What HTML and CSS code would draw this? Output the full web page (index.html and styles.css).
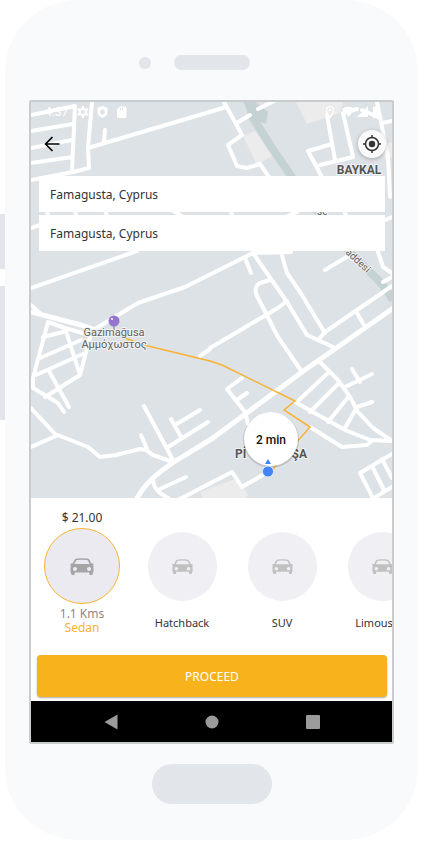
FILE: index.html
```html
<!DOCTYPE html>
<html lang="en">
<head>
<meta charset="utf-8">
<meta name="viewport" content="width=device-width, initial-scale=1">
<title>Choose a ride</title>
<link rel="stylesheet" href="styles.css">
</head>
<body>
<svg class="symbols" aria-hidden="true">
  <symbol id="car" viewBox="0 0 24 17">
    <path fill-rule="evenodd" d="M2.600 5.500 L4.200 2.200 Q5 .8 7 .5 Q12 -.1 17 .5 Q19 .8 19.800 2.200 L21.400 5.500 H23.500 V7.500 H23 Q23.500 8.500 23.500 10 V14.500 H22.800 V16 Q22.800 17 21.800 17 H20.300 Q19.300 17 19.300 16 V14.500 H4.700 V16 Q4.700 17 3.700 17 H2.200 Q1.200 17 1.200 16 V14.500 H.5 V10 Q.5 8.500 1 7.500 H.5 V5.500 Z M4.400 5.900 H19.600 L18.200 3 Q17.700 2.100 16.700 2 Q12 1.400 7.300 2 Q6.300 2.100 5.800 3 Z M5 9 a2 2 0 1 0 .01 0 Z M19 9 a2 2 0 1 0 .01 0 Z"/>
  </symbol>
</svg>
<main class="phone">
  <div class="side-buttons"><span class="key key-short"></span><span class="key key-long"></span></div>
  <div class="earpiece"><span class="camera"></span><span class="speaker"></span></div>
  <div class="screen">
    <section class="map">
      <svg class="map-canvas" viewBox="31 102 361 396" role="img" aria-label="Route map">
        <g class="block">
          <path d="M296 102H343L340 113L307 124ZM243 136L255 131L272 156L257 165ZM380 145L392 142V158L385 160ZM200 492L238 478L248 495L245 499H203Z"/>
        </g>
        <path class="river" d="M248 100L253 118L270 145L294 180L340 242L372 274Q383 284 393 300"/>
        <path class="river-bulge" d="M243 102H255L268 112L266 124L255 120Z"/>
        <g class="road">
          <path d="M31 115L75 106L72 171M31 131L73 124M31 148L72 140M31 163L72 157M31 180L73 172L89 168L88 148L92 102M88 148L213 111L226 107M104 142L105 130"/>
          <path d="M224 102L242 135L228 145L237 166L247 168L260 164L269 177M237 123L250 115M258 109L274 101"/>
          <path d="M327 115L335 160M332 144L308 151L322 177M320 165L353 157L343 113L357 109M362 110L378 117M377 102L388 157L390 197M382 123L392 121M385 220L392 217"/>
          <path d="M46 208L49 218M74 208L77 218M104 208L108 218M168 208L185 218M230 208L233 218M285 217L297 212M343 208L347 218M31 228L40 225"/>
          <path d="M31 288L137 251M31 305L41 314M95 329L138 303L185 287L213 273L253 253L287 302L307 335L333 347"/>
          <path d="M48 322L33 378V388L58 403L64 412M48 322L65 328L90 335M43 337L63 332M40 358L81 340M36 375L85 353M65 328L80 375M90 337L80 375L45 397M49 371L69 407"/>
          <path d="M31 408L55 434L88 447L100 457L116 455L140 449L146 450L153 455L173 462M31 447L56 436M141 435L147 449M144 406L174 462"/>
          <path d="M168 447L208 422M171 419L181 437M175 425L200 410M153 478Q153 488 160 493L171 500M158 490L186 477M178 500L232 472L242 487L268 472"/>
          <path d="M245 258L251 273M270 280L260 283Q253 287 257 296L278 337L302 372M210 348L278 308L287 301M253 253L291 252M281 252L287 273L300 292L325 333M318 340L325 332L392 286M325 270L350 255M378 252L383 267L392 273M383 282L392 277M357 313L364 325"/>
          <path d="M200 356L210 349"/>
          <path d="M318 360L338 380L350 397L358 412L373 428L392 441M310 412L338 384M328 422L349 396M345 428L357 407L372 402M345 387L372 374M352 369L360 382M328 373L299 400"/>
          <path d="M242 378L227 389L245 412L248 424M247 393L237 400M295 402L345 430L370 440L392 441M310 427L342 447L367 445L373 440"/>
          <path d="M392 454L360 473L374 500M372 466L384 490M382 459L392 478M374 498L392 487"/>
        </g>
        <path class="road road-wide" d="M31 312L81 325L96 330M136 500Q146 480 174 462L213 438L302 372L392 309"/>
        <path class="route" d="M114 334L144 345L210 361L222 365L295 401L284 410L310 427L296 443L272 470"/>
        <g class="map-label street"><text x="317" y="215">se</text><text transform="translate(345 253) rotate(43)">addesi</text></g>
        <text class="map-label district" x="359" y="174" text-anchor="middle">BAYKAL</text>
        <text class="map-label district" x="235" y="458">Pİ</text>
        <text class="map-label district" x="307" y="458" text-anchor="end">ŞA</text>
        <path class="pin-stem" d="M114 325V335"/>
        <circle class="pin" cx="114" cy="321" r="5.500"/>
        <circle class="pin-glint" cx="112" cy="319" r="1"/>
        <g class="map-label town" text-anchor="middle"><text x="114" y="336">Gazimağusa</text><text x="114" y="348">Αμμόχωστος</text></g>
        <circle class="bubble-shade" cx="271" cy="440" r="28"/>
        <circle class="bubble" cx="271" cy="439" r="27"/>
        <text class="eta" x="271" y="444" text-anchor="middle">2 min</text>
        <path class="me" d="M265 464L268 459L271 464Z"/>
        <circle class="me me-dot" cx="268" cy="471.500" r="5.500"/>
      </svg>
      <div class="map-overlay">
        <div class="status">
          <span class="clock">4:37</span>
          <svg class="status-icons" viewBox="0 0 52 14" aria-hidden="true">
            <circle cx="7" cy="7" r="3.200" fill="none" stroke="currentColor" stroke-width="2.200"/>
            <path d="M7 1V3.500M7 10.500V13M1.800 4L4 5.300M10 8.700L12.200 10M1.800 10L4 8.700M10 5.300L12.200 4" stroke="currentColor" stroke-width="2.200"/>
            <path fill="currentColor" fill-rule="evenodd" d="M26.500 1L31.500 2.800V6.500Q31.500 11 26.500 13Q21.500 11 21.500 6.500V2.800ZM26.500 4.600a2.400 2.400 0 1 0 .01 0ZM44 1.500H49Q50.500 1.500 50.500 3V11.500Q50.500 13 49 13H42.500Q41 13 41 11.500V4.500ZM44 3V5H45V3ZM46 3V5H47V3Z"/>
          </svg>
          <svg class="status-icons status-end" viewBox="0 0 56 14" aria-hidden="true">
            <path fill="none" stroke="currentColor" stroke-width="1.200" d="M5 12.500Q1.500 8 1.500 5a3.500 3.500 0 0 1 7 0Q8.500 8 5 12.500Z"/>
            <circle cx="5" cy="5" r="1.300" fill="currentColor"/>
            <path fill="currentColor" d="M17 4Q23.500 -.5 30 4L23.500 12ZM43 1V12H32ZM48 2H50V1H52V2H54V13H48Z"/>
          </svg>
        </div>
        <div class="toolbar">
          <button class="back" type="button" aria-label="Back"><svg viewBox="0 0 16 16"><path d="M15.500 8H2M8.500 1L1.500 8L8.500 15"/></svg></button>
          <button class="locate" type="button" aria-label="My location"><svg viewBox="0 0 20 20"><circle cx="10" cy="10" r="6.500"/><circle class="core" cx="10" cy="10" r="3.200"/><path d="M10 1V4M10 16V19M1 10H4M16 10H19"/></svg></button>
        </div>
        <form class="places">
          <input class="place" type="text" aria-label="Pickup" value="Famagusta, Cyprus">
          <input class="place" type="text" aria-label="Destination" value="Famagusta, Cyprus">
        </form>
      </div>
    </section>
    <section class="panel">
      <div class="rides">
        <button class="ride selected" type="button">
          <span class="price">$ 21.00</span>
          <span class="slot"><span class="disc"><svg class="car"><use href="#car"/></svg></span></span>
          <span class="caption"><span>1.1 Kms</span><span class="name">Sedan</span></span>
        </button>
        <button class="ride" type="button">
          <span class="price"></span>
          <span class="slot"><span class="disc"><svg class="car"><use href="#car"/></svg></span></span>
          <span class="caption">Hatchback</span>
        </button>
        <button class="ride" type="button">
          <span class="price"></span>
          <span class="slot"><span class="disc"><svg class="car"><use href="#car"/></svg></span></span>
          <span class="caption">SUV</span>
        </button>
        <button class="ride" type="button">
          <span class="price"></span>
          <span class="slot"><span class="disc"><svg class="car"><use href="#car"/></svg></span></span>
          <span class="caption">Limousine</span>
        </button>
      </div>
      <button class="proceed" type="button">PROCEED</button>
    </section>
    <nav class="system-nav">
      <button type="button" aria-label="System back"><svg viewBox="0 0 14 16"><path d="M13.500 .5V15.500L.5 8Z"/></svg></button>
      <button type="button" aria-label="Home"><svg viewBox="0 0 14 16"><circle cx="7" cy="8" r="6.500"/></svg></button>
      <button type="button" aria-label="Recent apps"><svg viewBox="0 0 14 16"><rect y="1" width="14" height="14" rx="1"/></svg></button>
    </nav>
  </div>
  <div class="home-key"></div>
</main>
</body>
</html>
```
FILE: styles.css
```css
* { box-sizing: border-box; }
body {
  margin: 0;
  background: #fff;
  font-family: Roboto, "Noto Sans", sans-serif;
  color: #333;
}
button {
  border: 0;
  padding: 0;
  background: none;
  font: inherit;
  color: inherit;
}
.symbols { position: absolute; width: 0; height: 0; }

.phone {
  position: relative;
  margin: 0 5px;
  padding: 55px 24px 36px;
  border-radius: 72px;
  background: #f9fafc;
}
.side-buttons {
  position: absolute;
  left: -5px;
  top: 214px;
  display: grid;
  gap: 17px;
}
.key { width: 5px; background: #e2e5ea; }
.key-short { height: 55px; }
.key-long { height: 134px; }
.earpiece {
  display: grid;
  grid-template-columns: 1fr auto 1fr;
  align-items: center;
  gap: 23px;
  margin-bottom: 30px;
}
.camera {
  justify-self: end;
  width: 12px;
  height: 12px;
  border-radius: 50%;
  background: #e2e5ea;
}
.speaker {
  width: 76px;
  height: 15px;
  border-radius: 8px;
  background: #e2e5ea;
}
.screen {
  overflow: hidden;
  border: 2px solid #c9cccd;
  border-radius: 2px;
  background: #fff;
}
.home-key {
  width: 120px;
  height: 40px;
  margin: 20px auto 0;
  border-radius: 20px;
  background: #e2e5ea;
}

.map { display: grid; }
.map-canvas, .map-overlay { grid-area: 1 / 1; }
.map-canvas {
  display: block;
  width: 100%;
  height: auto;
  background: #dde2e6;
}
.block { fill: #ececec; }
.river { fill: none; stroke: #c5d2d4; stroke-width: 8; }
.river-bulge { fill: #c5d2d4; }
.road {
  fill: none;
  stroke: #fff;
  stroke-width: 4;
  stroke-linecap: round;
  stroke-linejoin: round;
}
.road-wide { stroke-width: 5; }
.route { fill: none; stroke: #f9b233; stroke-width: 1.5; }
.map-label {
  fill: #616161;
  stroke: #f1f3f4;
  stroke-width: 2px;
  paint-order: stroke;
}
.district { font-size: 12px; font-weight: 700; fill: #555; }
.town { font-size: 11px; }
.street { font-size: 10px; }
.pin { fill: #9575cd; }
.pin-glint { fill: #fff; }
.pin-stem { stroke: #777; stroke-width: 1; }
.bubble-shade { fill: #00000026; }
.bubble { fill: #fff; }
.eta { font-size: 12px; font-weight: 500; fill: #111; }
.me { fill: #4285f4; }
.me-dot { stroke: #dfeafc; stroke-width: 1; }

.map-overlay { z-index: 1; }
.status {
  display: flex;
  align-items: center;
  height: 20px;
  padding: 0 11px 0 14px;
  color: #fff;
}
.clock { width: 31px; font-size: 12px; }
.status-icons { width: 52px; height: 14px; }
.status-end { width: 56px; margin-left: auto; }
.toolbar {
  display: flex;
  align-items: center;
  justify-content: space-between;
  height: 44px;
  margin-bottom: 10px;
  padding: 0 6px 0 13px;
}
.back { width: 16px; height: 16px; }
.back svg { display: block; fill: none; stroke: #000; stroke-width: 1.6; }
.locate {
  display: grid;
  place-items: center;
  width: 28px;
  height: 28px;
  border-radius: 50%;
  background: #fafafa;
  box-shadow: 0 1px 4px #0004;
}
.locate svg {
  width: 20px;
  height: 20px;
  fill: none;
  stroke: #333;
  stroke-width: 1.5;
}
.locate .core { fill: #333; stroke: none; }
.places {
  display: grid;
  gap: 3px;
  margin: 0 7px 0 8px;
}
.place {
  width: 100%;
  height: 36px;
  border: 0;
  padding: 0 11px;
  background: #fff;
  font: 12px "Noto Sans", Roboto, sans-serif;
  color: #333;
}

.panel {
  padding: 10px 5px 4px 6px;
  font-family: "Noto Sans", Roboto, sans-serif;
}
.rides {
  display: grid;
  grid-auto-flow: column;
  grid-auto-columns: 100px;
  margin: 0 -5px 17px;
}
.ride {
  display: grid;
  grid-template-rows: 20px 76px 34px;
  justify-items: center;
  font-size: 11px;
  line-height: 14px;
}
.price { font-size: 12px; line-height: 20px; }
.slot { display: grid; place-items: center; }
.disc {
  display: grid;
  place-items: center;
  width: 69px;
  height: 69px;
  border-radius: 50%;
  background: #f0eff4;
}
.car { width: 21px; height: 15px; fill: #c1c1c1; }
.caption {
  display: grid;
  padding-top: 4px;
  align-content: center;
  justify-items: center;
}
.selected .disc {
  width: 76px;
  height: 76px;
  border: 1px solid #f9b233;
  background: #ebeaf1;
}
.selected .car { width: 24px; height: 17px; fill: #a5a5a5; }
.selected .caption { padding-top: 0; font-size: 12px; color: #888; }
.selected .name { color: #f9b233; }
.proceed {
  display: block;
  width: 100%;
  height: 42px;
  border-radius: 4px;
  background: #f8b21b;
  box-shadow: 0 1px 2px #0005;
  font-size: 12px;
  color: #fff;
}
.system-nav {
  display: grid;
  grid-template-columns: repeat(3, 101px);
  justify-content: center;
  height: 41px;
  background: #000;
}
.system-nav button { display: grid; place-items: center; }
.system-nav svg { width: 14px; height: 16px; fill: #9b9b9b; }
```
